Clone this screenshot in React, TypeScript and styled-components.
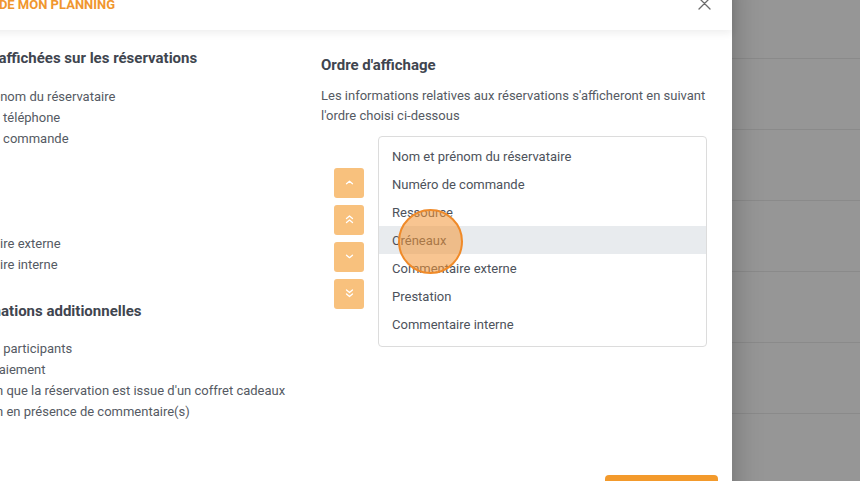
import React from "react";
import styled, { createGlobalStyle } from "styled-components";

const Global = createGlobalStyle`
  html, body { margin: 0; padding: 0; }
  body {
    font-family: Roboto, "Liberation Sans", Arial, sans-serif;
    background: #ffffff;
    overflow: hidden;
    width: 860px;
    height: 481px;
  }
`;

const Page = styled.div`
  position: relative;
  width: 860px;
  height: 481px;
  overflow: hidden;
  background: #fff;
`;

const BgList = styled.div`
  display: flex;
  flex-direction: column;
  margin-top: -12px;
`;

const BgRow = styled.div`
  height: 70px;
  border-bottom: 1px solid #ebebeb;
`;

const Backdrop = styled.div`
  position: absolute;
  inset: 0;
  background: rgba(0, 0, 0, 0.41);
`;

const Modal = styled.div`
  position: absolute;
  left: -113px;
  top: -22px;
  width: 845px;
  height: 540px;
  background: #fff;
  box-shadow: 0 0 28px rgba(0, 0, 0, 0.28);
  display: flex;
  flex-direction: column;
`;

const Header = styled.div`
  height: 52px;
  padding: 0 21px 0 25px;
  display: flex;
  align-items: center;
  justify-content: space-between;
  box-shadow: 0 3px 8px rgba(0, 0, 0, 0.07);
  position: relative;
  z-index: 1;
`;

const Title = styled.div`
  color: #f0962e;
  font-weight: 700;
  font-size: 13px;
  text-transform: uppercase;
`;

const CloseBtn = styled.div`
  width: 14px;
  height: 14px;
  margin-top: -1px;
  display: flex;
  align-items: center;
  justify-content: center;
`;

const Body = styled.div`
  display: grid;
  grid-template-columns: 1fr 386px;
  column-gap: 30px;
  padding: 18px 25px 0 21px;
`;

const Column = styled.div<{ $offset?: number }>`
  display: flex;
  flex-direction: column;
  padding-top: ${(p) => p.$offset ?? 0}px;
`;

const Section = styled.div<{ $top: number }>`
  display: flex;
  flex-direction: column;
  margin-top: ${(p) => p.$top}px;
`;

const SectionTitle = styled.div`
  font-size: 15px;
  line-height: 20px;
  font-weight: 700;
  color: #40454f;
`;

const Items = styled.div<{ $space: number }>`
  display: flex;
  flex-direction: column;
  margin-top: ${(p) => p.$space}px;
  padding-left: 4px;
`;

const Item = styled.label`
  display: flex;
  align-items: center;
  gap: 10px;
  font-size: 13px;
  line-height: 21px;
  color: #555a63;
  white-space: nowrap;
`;

const Check = styled.span`
  width: 12px;
  height: 12px;
  border: 1px solid #c8c8c8;
  border-radius: 2px;
  flex: none;
`;

const Paragraph = styled.p`
  margin: 11px 0 0;
  font-size: 13px;
  line-height: 20px;
  color: #555a63;
`;

const OrderRow = styled.div`
  display: flex;
  align-items: center;
  gap: 14px;
  padding-left: 13px;
  margin-top: 10px;
`;

const MoveButtons = styled.div`
  display: flex;
  flex-direction: column;
  gap: 7px;
  margin-top: -7px;
`;

const MoveButton = styled.button`
  width: 30px;
  height: 30px;
  border: none;
  border-radius: 3px;
  background: #f8c17d;
  padding: 0;
  display: flex;
  align-items: center;
  justify-content: center;
`;

const OrderList = styled.div`
  flex: 1;
  position: relative;
  border: 1px solid #dcdcdc;
  border-radius: 4px;
  padding: 5px 0 8px;
`;

const OrderItem = styled.div<{ $active?: boolean }>`
  height: 28px;
  display: flex;
  align-items: center;
  padding-left: 13px;
  font-size: 13px;
  color: #4d525b;
  background: ${(p) => (p.$active ? "#e8ebee" : "transparent")};
`;

const ClickMark = styled.div`
  position: absolute;
  left: 19px;
  top: 72px;
  width: 61px;
  height: 61px;
  border-radius: 50%;
  border: 2px solid #f08a28;
  background: rgba(243, 150, 55, 0.55);
  pointer-events: none;
`;

const Footer = styled.div`
  margin-top: auto;
  display: flex;
  justify-content: flex-end;
  padding: 0 14px 0 0;
  height: 43px;
`;

const PrimaryButton = styled.button`
  width: 113px;
  height: 36px;
  border: none;
  border-radius: 4px;
  background: #f39a2c;
`;

const Chevron = ({ dir, double }: { dir: "up" | "down"; double?: boolean }) => {
  const single = (y: number) =>
    dir === "up"
      ? `M4.5 ${y + 2.5} L7.5 ${y} L10.5 ${y + 2.5}`
      : `M4.5 ${y} L7.5 ${y + 2.5} L10.5 ${y}`;
  return (
    <svg width="15" height="15" viewBox="0 0 15 15" fill="none">
      {double ? (
        <>
          <path d={single(4)} stroke="#fff" strokeWidth="1.3" strokeLinecap="round" strokeLinejoin="round" />
          <path d={single(8)} stroke="#fff" strokeWidth="1.3" strokeLinecap="round" strokeLinejoin="round" />
        </>
      ) : (
        <path d={single(6.2)} stroke="#fff" strokeWidth="1.3" strokeLinecap="round" strokeLinejoin="round" />
      )}
    </svg>
  );
};

const sections = [
  {
    title: "Informations affichées sur les réservations",
    top: 0,
    space: 18,
    items: ["Nom et prénom du réservataire", "Numéro de téléphone", "Numéro de commande"],
  },
  {
    title: "Réservation",
    top: 25,
    space: 18,
    items: ["Prestation", "Commentaire externe", "Commentaire interne"],
  },
  {
    title: "Autres informations additionnelles",
    top: 26,
    space: 17,
    items: [
      "Nombre de participants",
      "Statut de paiement",
      "Notification que la réservation est issue d'un coffret cadeaux",
      "Notification en présence de commentaire(s)",
    ],
  },
];

const order = [
  "Nom et prénom du réservataire",
  "Numéro de commande",
  "Ressource",
  "Créneaux",
  "Commentaire externe",
  "Prestation",
  "Commentaire interne",
];

export default function App() {
  return (
    <Page>
      <Global />
      <BgList>
        {Array.from({ length: 8 }).map((_, i) => (
          <BgRow key={i} />
        ))}
      </BgList>
      <Backdrop />
      <Modal>
        <Header>
          <Title>Paramètres de mon planning</Title>
          <CloseBtn>
            <svg width="13" height="13" viewBox="0 0 13 13">
              <path d="M1 1 L12 12 M12 1 L1 12" stroke="#6b6b6b" strokeWidth="1.3" strokeLinecap="round" />
            </svg>
          </CloseBtn>
        </Header>
        <Body>
          <Column>
            {sections.map((s) => (
              <Section key={s.title} $top={s.top}>
                <SectionTitle>{s.title}</SectionTitle>
                <Items $space={s.space}>
                  {s.items.map((it) => (
                    <Item key={it}>
                      <Check />
                      {it}
                    </Item>
                  ))}
                </Items>
              </Section>
            ))}
          </Column>
          <Column $offset={7}>
            <SectionTitle>Ordre d'affichage</SectionTitle>
            <Paragraph>
              Les informations relatives aux réservations s'afficheront en suivant l'ordre choisi ci-dessous
            </Paragraph>
            <OrderRow>
              <MoveButtons>
                <MoveButton><Chevron dir="up" /></MoveButton>
                <MoveButton><Chevron dir="up" double /></MoveButton>
                <MoveButton><Chevron dir="down" /></MoveButton>
                <MoveButton><Chevron dir="down" double /></MoveButton>
              </MoveButtons>
              <OrderList>
                {order.map((o) => (
                  <OrderItem key={o} $active={o === "Créneaux"}>
                    {o}
                  </OrderItem>
                ))}
                <ClickMark />
              </OrderList>
            </OrderRow>
          </Column>
        </Body>
        <Footer>
          <PrimaryButton />
        </Footer>
      </Modal>
    </Page>
  );
}
